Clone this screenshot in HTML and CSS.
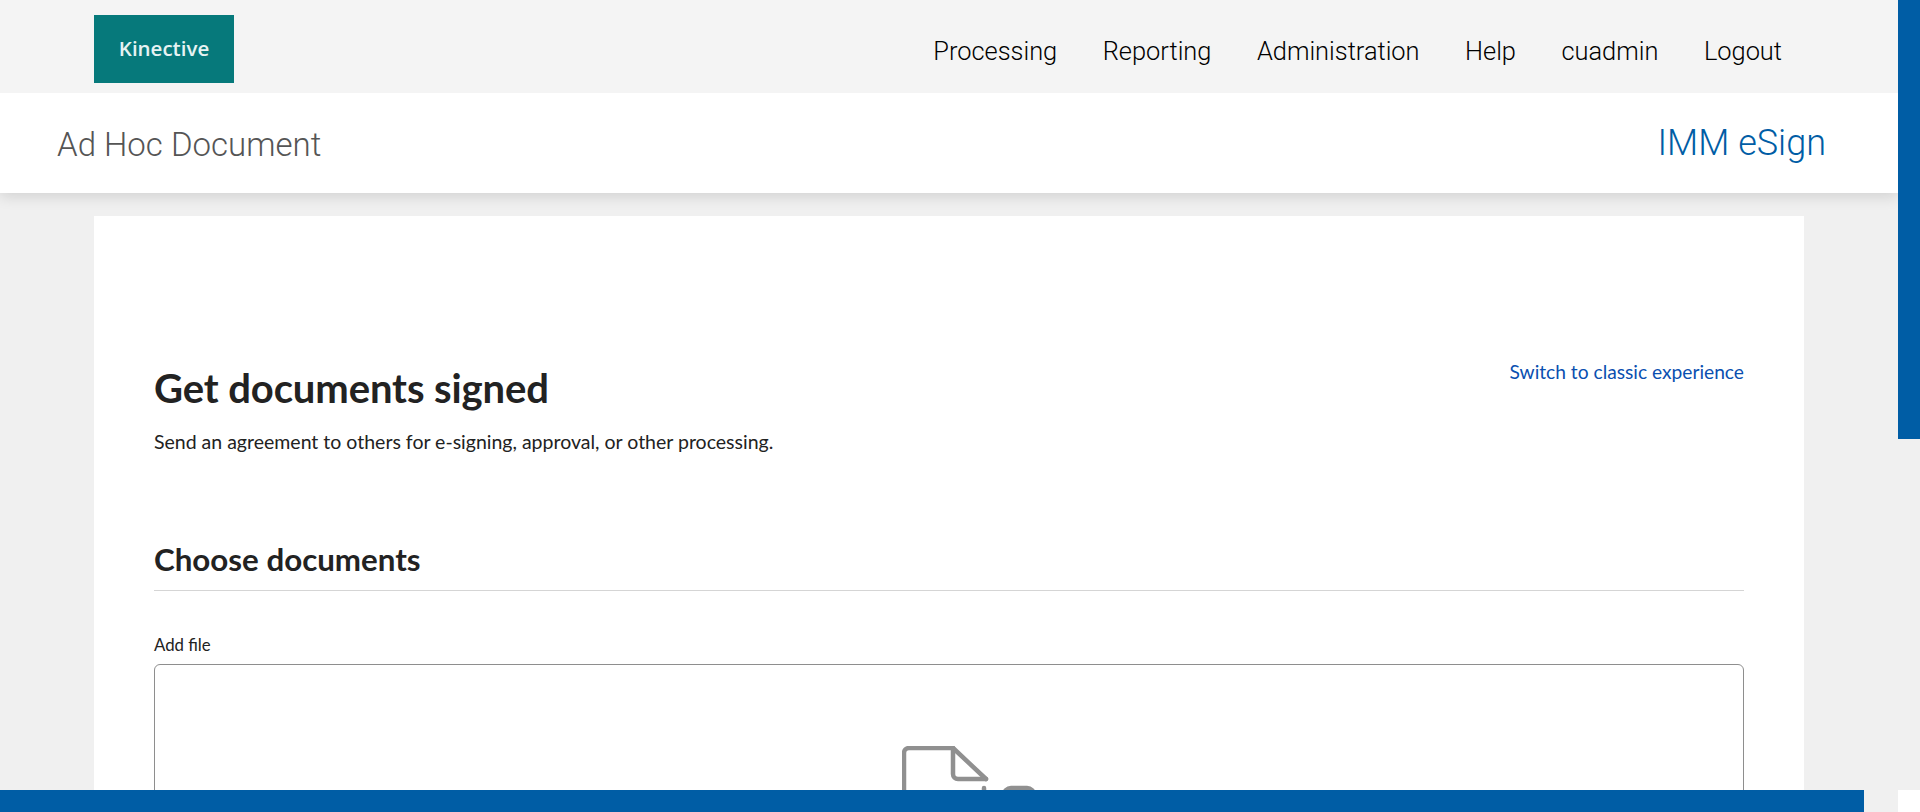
FILE: index.html
```html
<!DOCTYPE html>
<html lang="en">
<head>
<meta charset="utf-8">
<title>Ad Hoc Document</title>
<link rel="stylesheet" href="styles.css">
</head>
<body>
<div class="window">
  <div class="viewport">
    <header class="topbar">
      <div class="logo">Kinective</div>
      <nav class="nav">
        <a>Processing</a>
        <a>Reporting</a>
        <a>Administration</a>
        <a>Help</a>
        <a>cuadmin</a>
        <a>Logout</a>
      </nav>
    </header>
    <div class="subbar">
      <div class="page-title">Ad Hoc Document</div>
      <div class="product">IMM eSign</div>
    </div>
    <main class="card">
      <div class="intro">
        <div>
          <h1>Get documents signed</h1>
          <p class="lead">Send an agreement to others for e-signing, approval, or other processing.</p>
        </div>
        <a class="switch">Switch to classic experience</a>
      </div>
      <h2>Choose documents</h2>
      <div class="field-label">Add file</div>
      <div class="dropzone">
        <svg class="doc-icon" width="140" height="120" viewBox="0 0 140 120" fill="none" stroke="#909090" stroke-width="4.5" stroke-linejoin="round" stroke-linecap="round">
          <path d="M2 120V7a5 5 0 0 1 5-5H51L84 33"/>
          <path d="M51 2V28a5 5 0 0 0 5 5H84"/>
          <path d="M82 42V120"/>
          <rect x="102" y="42" width="30" height="60" rx="7" fill="#909090"/>
        </svg>
      </div>
    </main>
  </div>
  <div class="vscroll"><div class="vthumb"></div></div>
  <div class="hscroll"><div class="hthumb"></div></div>
  <div class="corner"></div>
</div>
</body>
</html>
```
FILE: styles.css
```css
* { box-sizing: border-box; }
html, body { margin: 0; height: 100%; overflow: hidden; }
body { background: #f0f0f0; font-family: "Lato", "Open Sans", sans-serif; }

.window {
  display: grid;
  grid-template-columns: 1898px 22px;
  grid-template-rows: 790px 22px;
  height: 812px;
}
.viewport { overflow: hidden; background: #f0f0f0; }

.topbar {
  position: relative;
  z-index: 1;
  height: 93px;
  background: #f4f4f4;
  display: flex;
  align-items: center;
  justify-content: space-between;
  padding: 0 116px 0 94px;
}
.logo {
  width: 140px;
  height: 68px;
  margin-top: 5px;
  background: #06797b;
  color: #e6f3f3;
  font-family: "Open Sans", sans-serif;
  font-weight: 600;
  font-size: 20.5px;
  display: flex;
  align-items: center;
  justify-content: center;
  padding-bottom: 3px;
}
.nav {
  display: flex;
  gap: 45.5px;
  margin-top: 8px;
  font-family: "Roboto", sans-serif;
  font-weight: 300;
  font-size: 25.4px;
  line-height: 36px;
  color: #000;
}

.subbar {
  position: relative;
  height: 100px;
  background: #fff;
  box-shadow: 0 3px 14px rgba(0, 0, 0, .14);
  display: flex;
  align-items: center;
  justify-content: space-between;
  padding: 0 72px 0 57px;
  font-family: "Roboto", sans-serif;
  font-weight: 300;
  font-size: 33px;
}
.page-title { color: #555; padding-top: 2px; }
.product { color: #005da5; font-size: 36px; }

.card {
  margin: 23px 94px 0;
  background: #fff;
  height: 600px;
  padding: 147px 60px 0;
}
.intro {
  display: flex;
  justify-content: space-between;
  align-items: flex-start;
}
h1 {
  margin: 0;
  font-size: 40px;
  line-height: 50px;
  font-weight: 700;
  color: #222;
  letter-spacing: -.1px;
}
.lead {
  margin: 16px 0 0;
  font-size: 19.5px;
  line-height: 26px;
  color: #222;
}
.switch {
  margin-top: -4px;
  font-size: 19.2px;
  line-height: 26px;
  color: #0a4fb0;
}
h2 {
  margin: 81px 0 0;
  height: 55px;
  font-size: 31.3px;
  line-height: 46px;
  font-weight: 700;
  color: #222;
  border-bottom: 1px solid #d5d5d5;
}
.field-label {
  margin-top: 44px;
  font-size: 16.8px;
  line-height: 20px;
  color: #222;
}
.dropzone {
  position: relative;
  margin-top: 9px;
  height: 300px;
  border: 1px solid #8e8e8e;
  border-radius: 6px;
  display: flex;
  justify-content: center;
  padding-top: 81px;
}
.doc-icon { display: block; margin-left: 46px; }

.vscroll { background: #f0f0f0; }
.vthumb { width: 22px; height: 439px; background: #005da5; }
.hscroll { background: #f0f0f0; }
.hthumb { width: 1864px; height: 22px; background: #005da5; }
.corner { background: #fff; }
```
